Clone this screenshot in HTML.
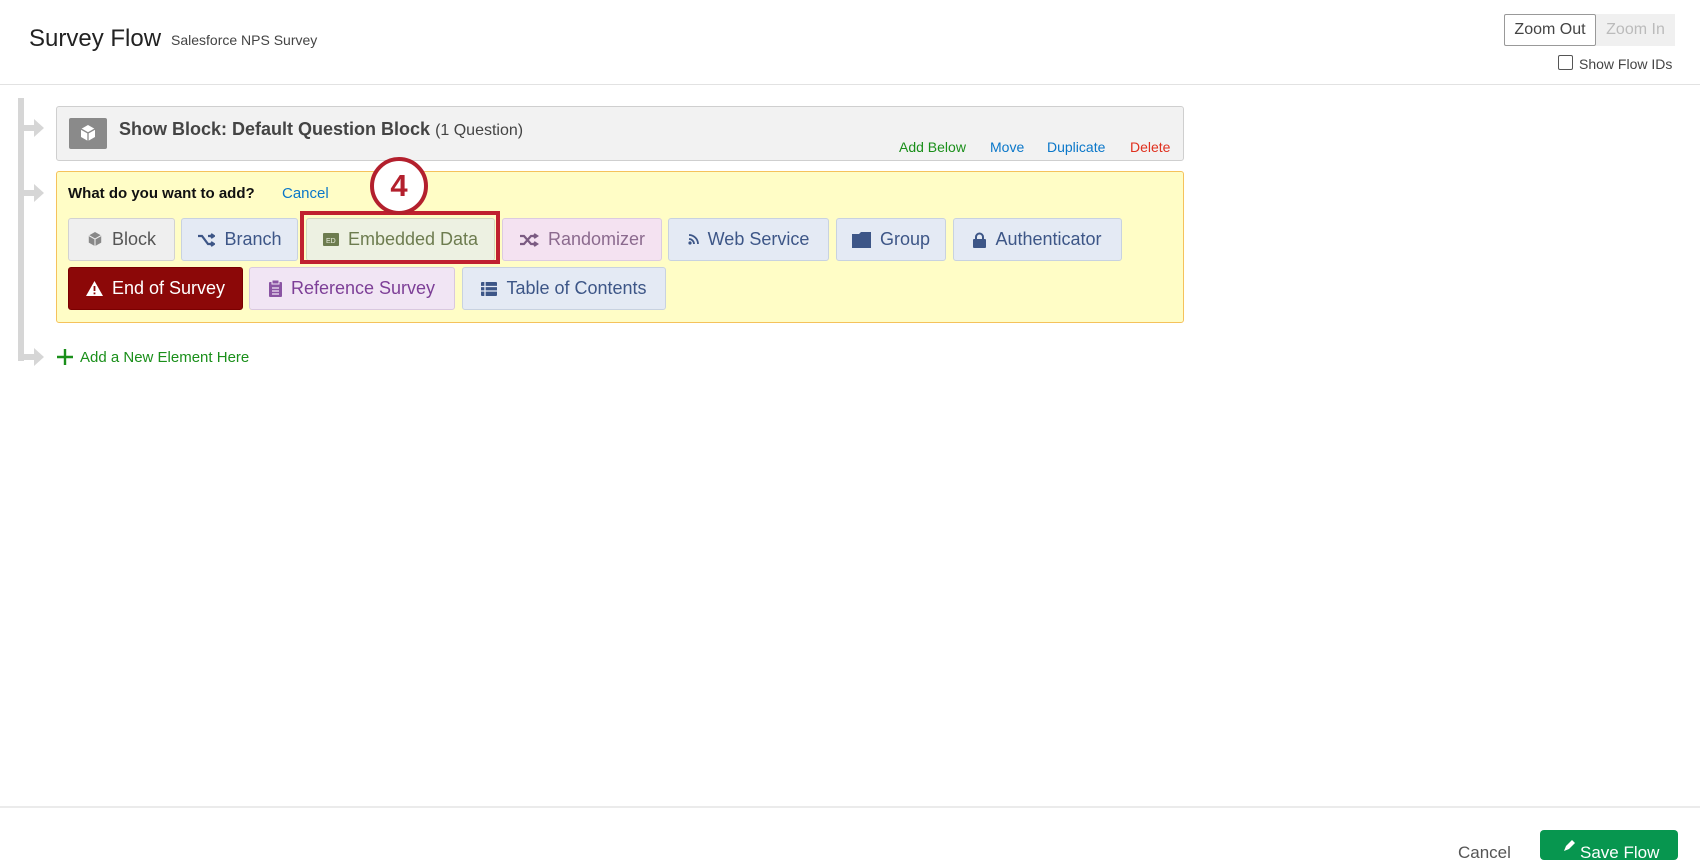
<!DOCTYPE html>
<html><head><style>
*{box-sizing:border-box;margin:0;padding:0}
body{width:1700px;height:850px;position:relative;background:#fff;font-family:"Liberation Sans",sans-serif;overflow:hidden;color:#333}
.a{position:absolute}
.btn{position:absolute;height:43px;border:1px solid #c8d2e0;border-radius:3px;font-size:18px;display:flex;align-items:center;justify-content:center;gap:9px;background:#e4eaf4;color:#3d5687;white-space:nowrap}
.btn svg{flex:none}
</style></head><body>
<div class="a" style="left:29px;top:25px;font-size:24px;color:#222">Survey Flow</div>
<div class="a" style="left:171px;top:32px;font-size:14px;color:#444">Salesforce NPS Survey</div>
<div class="a" style="left:1504px;top:14px;width:92px;height:32px;border:1px solid #999;border-radius:2px;font-size:16px;color:#444;display:flex;align-items:center;justify-content:center">Zoom Out</div>
<div class="a" style="left:1596px;top:14px;width:79px;height:32px;background:#f0f0f0;font-size:16px;color:#bbb;display:flex;align-items:center;justify-content:center">Zoom In</div>
<div class="a" style="left:1558px;top:55px;width:15px;height:15px;border:1px solid #555;border-radius:2px"></div>
<div class="a" style="left:1579px;top:56px;font-size:14px;color:#444">Show Flow IDs</div>
<div class="a" style="left:0;top:84px;width:1700px;height:1px;background:#e2e2e2"></div>

<div class="a" style="left:18px;top:98px;width:6px;height:263px;background:#d6d6d6"></div>
<svg class="a" style="left:18px;top:116px" width="30" height="24"><path d="M0 9H16V3L26 12L16 21V15H0Z" fill="#d6d6d6"/></svg>
<svg class="a" style="left:18px;top:181px" width="30" height="24"><path d="M0 9H16V3L26 12L16 21V15H0Z" fill="#d6d6d6"/></svg>
<svg class="a" style="left:18px;top:345px" width="30" height="24"><path d="M0 9H16V3L26 12L16 21V15H0Z" fill="#d6d6d6"/></svg>

<div class="a" style="left:56px;top:106px;width:1128px;height:55px;background:#f2f2f2;border:1px solid #cfcfcf;border-radius:3px"></div>
<div class="a" style="left:69px;top:118px;width:38px;height:31px;background:#8a8a8a;border-radius:2px"></div>
<svg class="a" style="left:79px;top:124px" width="18" height="19" viewBox="0 0 18 19"><path d="M9 1L16 5V13L9 17L2 13V5Z" fill="#fff"/><path d="M2 5L9 9L16 5M9 9V17" stroke="#8a8a8a" stroke-width="1.3" fill="none"/></svg>
<div class="a" style="left:119px;top:119px;font-size:18px;color:#444"><b>Show Block: Default Question Block</b> <span style="font-size:16px">(1 Question)</span></div>
<div class="a" style="left:899px;top:139px;font-size:14px;color:#1a8f1a">Add Below</div>
<div class="a" style="left:990px;top:139px;font-size:14px;color:#0a77c9">Move</div>
<div class="a" style="left:1047px;top:139px;font-size:14px;color:#0a77c9">Duplicate</div>
<div class="a" style="left:1130px;top:139px;font-size:14px;color:#e0301e">Delete</div>

<div class="a" style="left:56px;top:171px;width:1128px;height:152px;background:#fffdc6;border:1px solid #f5c25c;border-radius:3px"></div>
<div class="a" style="left:68px;top:185px;font-size:15px;font-weight:bold;color:#111">What do you want to add?</div>
<div class="a" style="left:282px;top:185px;font-size:15px;color:#0a77c9">Cancel</div>

<div class="btn" style="left:68px;top:218px;width:107px;background:#efefef;border-color:#d2d2d2;color:#555"><svg width="16" height="17" viewBox="0 0 18 19"><path d="M9 1L16 5V13L9 17L2 13V5Z" fill="#888"/><path d="M2 5L9 9L16 5M9 9V17" stroke="#efefef" stroke-width="1.2" fill="none"/></svg>Block</div>
<div class="btn" style="left:181px;top:218px;width:117px"><svg width="18" height="14" viewBox="0 0 18 14"><path d="M1 3H5L11 11H16M11 3H16M14 1L17 3L14 5M14 9L17 11L14 13" stroke="#3d5687" stroke-width="2.2" fill="none"/></svg>Branch</div>
<div class="btn" style="left:306px;top:218px;width:189px;background:#edf1e2;border-color:#d2d8c2;color:#6d7c4f"><svg width="16" height="13"><rect width="16" height="13" rx="1" fill="#6d7c4f"/><text x="3" y="10" font-size="7" fill="#edf1e2" font-family="Liberation Sans">ED</text></svg>Embedded Data</div>
<div class="btn" style="left:502px;top:218px;width:160px;background:#f4e2f1;border-color:#dccbe0;color:#8b6a8e"><svg width="20" height="14" viewBox="0 0 20 14"><path d="M1 3H5L12 11H17M1 11H5L12 3H17M15 1L18 3L15 5M15 9L18 11L15 13" stroke="#7b5b82" stroke-width="2.2" fill="none"/></svg>Randomizer</div>
<div class="btn" style="left:668px;top:218px;width:161px"><svg width="11" height="11"><circle cx="2" cy="9" r="1.6" fill="#3d5687"/><path d="M1 5A5 5 0 0 1 6 10M1 1A9 9 0 0 1 10 10" stroke="#3d5687" stroke-width="1.8" fill="none"/></svg>Web Service</div>
<div class="btn" style="left:836px;top:218px;width:110px"><svg width="19" height="16"><path d="M0 2H7L9 0H19V16H0Z" fill="#3d5687"/></svg>Group</div>
<div class="btn" style="left:953px;top:218px;width:169px"><svg width="13" height="16"><path d="M3 7V5A3.5 3.5 0 0 1 10 5V7" stroke="#3d5687" stroke-width="2" fill="none"/><rect x="0" y="7" width="13" height="9" rx="1" fill="#3d5687"/></svg>Authenticator</div>

<div class="btn" style="left:68px;top:267px;width:175px;background:#8c0808;border-color:#7a0000;color:#fff"><svg width="17" height="15"><path d="M8.5 0L17 15H0Z" fill="#fff"/><rect x="7.6" y="5" width="1.8" height="5" fill="#8c0808"/><rect x="7.6" y="11.5" width="1.8" height="1.8" fill="#8c0808"/></svg>End of Survey</div>
<div class="btn" style="left:249px;top:267px;width:206px;background:#f1e5f4;border-color:#d9c8df;color:#7d3f97"><svg width="13" height="17"><rect x="0" y="2" width="13" height="15" rx="1" fill="#8a54a3"/><rect x="3" y="0" width="7" height="4" fill="#8a54a3" stroke="#f1e5f4"/><path d="M3 8H10M3 11H10M3 14H10" stroke="#f1e5f4" stroke-width="1.3"/></svg>Reference Survey</div>
<div class="btn" style="left:462px;top:267px;width:204px"><svg width="16" height="14"><rect width="16" height="14" rx="1" fill="#3d5687"/><path d="M0 4.5H16M0 9H16M4 0V14" stroke="#e4eaf4" stroke-width="1.3"/></svg>Table of Contents</div>

<div class="a" style="left:300px;top:211px;width:200px;height:53px;border:4px solid #c0212f"></div>
<div class="a" style="left:370px;top:157px;width:58px;height:58px;border:4px solid #b3202d;border-radius:50%;background:#fff;font-size:31px;font-weight:bold;color:#b3202d;display:flex;align-items:center;justify-content:center">4</div>

<svg class="a" style="left:57px;top:349px" width="16" height="16"><path d="M8 0V16M0 8H16" stroke="#1a8f1a" stroke-width="2.4"/></svg>
<div class="a" style="left:80px;top:349px;font-size:15px;color:#1a8f1a">Add a New Element Here</div>

<div class="a" style="left:0;top:806px;width:1700px;height:2px;background:#ebebeb"></div>
<div class="a" style="left:1458px;top:843px;font-size:17px;color:#555">Cancel</div>
<div class="a" style="left:1540px;top:830px;width:138px;height:30px;background:#07964f;border-radius:4px;color:#fff;font-size:17px;padding:13px 0 0 40px">Save Flow</div>
<svg class="a" style="left:1563px;top:840px" width="12" height="12"><path d="M1 11L3 6L9 0L12 3L6 9Z" fill="#fff"/></svg>
</body></html>
